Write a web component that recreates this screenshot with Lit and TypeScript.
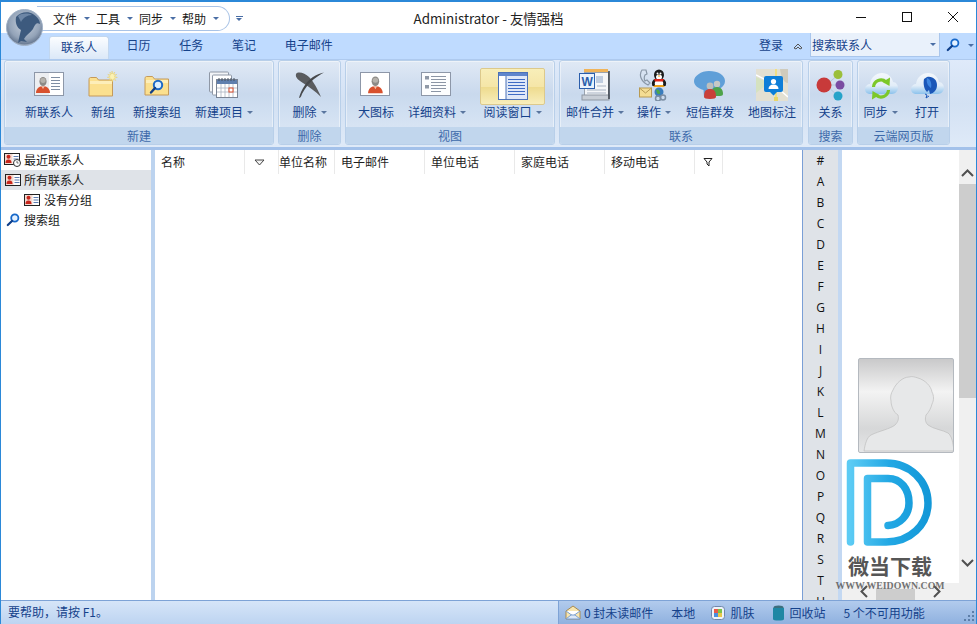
import { LitElement, html, css, svg } from "lit";
import { customElement } from "lit/decorators.js";

const person = (x: number, y: number, s = 1) => svg`<g transform="translate(${x} ${y}) scale(${s})">
  <ellipse cx="8" cy="5.500" rx="3.600" ry="4.600" fill="#8c8a86"/><ellipse cx="8" cy="4.500" rx="2.600" ry="2.400" fill="#b5b2ac"/>
  <path d="M1 17c0-4 3-6.500 5-6.500h4c2 0 5 2.500 5 6.500z" fill="#d8512e"/><path d="M6.500 10.500L8 13l1.500-2.500z" fill="#f2c2a8"/></g>`;

const cardLines = (x: number, y: number, n: number) => svg`${Array.from({ length: n }, (_, i) => svg`<rect x="${x}" y="${y + i * 3}" width="9" height="1" fill="#7f8ea3"/>`)}`;

const folder = svg`<path d="M1 5.500c0-1 .5-2 1.500-2h6l2 2.500h14v16H1z" fill="#fbe08f" stroke="#c59a5a"/><path d="M2 7h22v3H2z" fill="#fdeeb9"/>`;

const cloud = svg`<path d="M7 25c-4 0-6-2-6-5 0-3 3-5 5-5 1-7 6-11 12-11 6 0 10 4 11 9 3 0 5 3 5 6 0 3-3 6-6 6z" fill="url(#cloudG)"/>
  <defs><linearGradient id="cloudG" x1="0" y1="0" x2="0" y2="1"><stop offset="0" stop-color="#f4f8fc"/><stop offset=".6" stop-color="#e2edf8"/><stop offset="1" stop-color="#8cc2ec"/></linearGradient></defs>`;

const icons: Record<string, unknown> = {
  contact: html`<svg width="32" height="26" viewBox="0 0 32 26"><rect x="1.500" y=".5" width="29" height="23" fill="#fff" stroke="#8d97a8"/><rect x="2" y="1" width="14" height="22" fill="#eceef1"/>${person(2, 4)}${cardLines(18, 5, 5)}</svg>`,
  newfolder: html`<svg width="32" height="28" viewBox="0 0 32 28"><g transform="translate(1 3)">${folder}</g><path d="M25 0l.8 3 2-2-1 3 3-.6-2.500 2 3 1-3 .5 1.500 2.600-2.700-1.500-.6 3-1-3-2.500 1.500 1.300-2.600-3-.5 2.800-1-2.300-2 3 .6-1-3 2 2z" fill="#fbf2b4" stroke="#e8c84e" stroke-width=".4"/></svg>`,
  searchfolder: html`<svg width="28" height="26" viewBox="0 0 28 26"><g transform="translate(1 1)">${folder}</g><circle cx="15" cy="13" r="4.200" fill="#dcefff" stroke="#1d69c6" stroke-width="2"/><path d="M12 16l-4 4.500" stroke="#123f86" stroke-width="2.400" stroke-linecap="round"/></svg>`,
  newitem: html`<svg width="30" height="28" viewBox="0 0 30 28"><rect x=".5" y="1" width="19" height="20" rx="1" fill="#f2f4f7" stroke="#8f98a6"/><rect x="3.500" y="4" width="19" height="20" rx="1" fill="#fff" stroke="#8f98a6"/><rect x="7.500" y="8.500" width="21" height="18" fill="#fff" stroke="#7a8494"/><rect x="8" y="9" width="20" height="4" fill="#5f7fae"/><path d="M8 17h20M8 21h20M12 13v13M16 13v13M20 13v13M24 13v13" stroke="#a9b2c0" stroke-width=".8"/><rect x="20" y="17" width="4" height="4" fill="#fff" stroke="#d94a28"/><path d="M10 7v3M13 7v3M16 7v3M19 7v3M22 7v3M25 7v3" stroke="#45505f"/></svg>`,
  del: html`<svg width="30" height="28" viewBox="0 0 30 28"><path d="M1 3C3 0 10 2 14 6c5 5 9 13 12 20C20 20 14 16 8 12 4 9 0 7 1 3z" fill="#5a5c5f"/><path d="M29 1.500C21 3 14 8 10 14c-3 4-5 9-6 13 1 0 2-1 3-4 3-6 7-11 12-15 4-3 7-5 10-6.500z" fill="#47494c"/></svg>`,
  large: html`<svg width="32" height="26" viewBox="0 0 32 26"><rect x=".5" y=".5" width="29" height="23" fill="#fff" stroke="#8d97a8"/>${person(7, 3.500, 1.050)}</svg>`,
  detail: html`<svg width="32" height="26" viewBox="0 0 32 26"><rect x=".5" y=".5" width="29" height="23" fill="#fcfdfe" stroke="#8d97a8"/><rect x="4" y="4" width="4" height="3.500" fill="#8f98a6"/><rect x="4" y="13" width="4" height="3.500" fill="#8f98a6"/><path d="M10 4.500h15M10 7.500h15M10 10.500h15M10 13.500h15M10 16.500h15M10 19.500h10" stroke="#8b95a5"/></svg>`,
  reading: html`<svg width="30" height="28" viewBox="0 0 30 28"><rect x=".5" y=".5" width="29" height="27" fill="#fff" stroke="#4c72b8"/><rect x="1" y="1" width="28" height="3" fill="#5f86cc"/><rect x="8" y="4" width="21" height="23" fill="#dfe8f8"/><path d="M8 4v23" stroke="#4c72b8"/><path d="M10 7.500h17M10 10.500h17M10 13.500h17M10 16.500h17M10 19.500h17M10 22.500h17" stroke="#3f6cc4"/></svg>`,
  word: html`<svg width="32" height="34" viewBox="0 0 32 34"><path d="M5 1h24v3H5z" fill="#f0b45a"/><rect x="5.500" y="4.500" width="24" height="25" fill="#f4f6f9" stroke="#9aa3ae"/><rect x="3" y="27" width="27" height="5" fill="#c8ced6" stroke="#8f98a3"/><path d="M30 3v28" stroke="#3a4048" stroke-width="1.500"/><rect x=".5" y="5.500" width="15" height="15" fill="#eaf2fc" stroke="#2b5eab"/><text x="2.500" y="17.500" font-size="12" font-weight="700" fill="#2b5eab" font-family="Liberation Sans">W</text><rect x="17" y="8" width="7" height="7" fill="#bfcde0"/><path d="M8 22h19M8 25h19M18 18h9" stroke="#a8b3c2"/></svg>`,
  action: html`<svg width="30" height="32" viewBox="0 0 30 32"><path d="M3 1C0 5 1 12 9 16l2-2-3-3-2 1c-1-2-1-4 0-6l2-1-1-4z" fill="none" stroke="#8a98a8" stroke-width="1.200"/><ellipse cx="20" cy="6" rx="5" ry="5.500" fill="#1b1b1b"/><ellipse cx="20" cy="8" rx="3" ry="2.500" fill="#fff"/><circle cx="18.500" cy="4.500" r="1" fill="#fff"/><circle cx="21.500" cy="4.500" r="1" fill="#fff"/><path d="M18.500 6.500h3L20 8z" fill="#f0a41c"/><path d="M15.500 10c-3 2-3 5-2 7h13c1-2 1-5-2-7z" fill="#1b1b1b"/><path d="M16.500 12c-1 2-1 3 0 5h7c1-2 1-3 0-5z" fill="#fff"/><path d="M15 10h10l-1 2.500h-8z" fill="#e0261a"/><path d="M14 18h6v-2h-4zM20 18h6l-2-2h-4z" fill="#f0a41c"/><rect x=".5" y="19" width="12" height="9" fill="#f4dd93" stroke="#b89a52"/><path d="M.5 19l6 5 6-5" fill="none" stroke="#b89a52"/><circle cx="20" cy="23" r="4.500" fill="#3b7dbd"/><path d="M17 21c2-1 3 0 4 2s-2 3-3 1z" fill="#4da74a"/><circle cx="24" cy="28.500" r="2.500" fill="none" stroke="#7b8ea3" stroke-width="1.500"/><circle cx="19" cy="29.500" r="2.500" fill="none" stroke="#7b8ea3" stroke-width="1.500"/></svg>`,
  sms: html`<svg width="34" height="32" viewBox="0 0 34 32"><path d="M16 2c9 0 16 4 16 10 0 6-7 10-15 10h-3l-3 6 -.5-7C4 19 1 16 1 12 1 7 8 2 16 2z" fill="#5f9fd8"/><circle cx="24" cy="15" r="3.200" fill="#c7c9c6"/><path d="M18 27c0-6 2-9 6-9s6 3 6 7c0 1-1 2-3 2z" fill="#4ea34a"/><circle cx="17" cy="17" r="3.400" fill="#bdbfbd"/><path d="M11 28c0-6 2-8 6-8s6 2 6 8c0 1-2 2-6 2s-6-1-6-2z" fill="#c9403a"/></svg>`,
  map: html`<svg width="32" height="32" viewBox="0 0 32 32"><rect width="32" height="32" fill="#e3e0d2"/><path d="M0 8l13 6L0 24z" fill="#d5e2c0"/><path d="M19 0h2v32h-2z" fill="#f1df84"/><path d="M24 0h8v14c-4 0-7-6-8-14z" fill="#cfcbbc"/><path d="M0 6l16 8M16 14l16 14" stroke="#fff" stroke-width="1.500"/><rect x="18" y="28" width="4" height="4" fill="#e9d66b"/><path d="M8 9a2 2 0 0 1 2-2h15a2 2 0 0 1 2 2v12a2 2 0 0 1-2 2h-4l-3.500 3.500L14 23h-4a2 2 0 0 1-2-2z" fill="#0d7ed8"/><circle cx="17.500" cy="12.500" r="2.600" fill="#fff"/><path d="M12.500 20c0-3 2-4.500 5-4.500s5 1.500 5 4.500z" fill="#fff"/></svg>`,
  rel: html`<svg width="30" height="32" viewBox="0 0 30 32"><path d="M10 16L22 6M10 16h17M10 16l12 11" stroke="#b9c6d8"/><circle cx="22" cy="5.500" r="4.500" fill="#9bbf3a"/><circle cx="8" cy="16" r="7.500" fill="#c83a3a"/><circle cx="24" cy="16" r="4.500" fill="#7a4ca2"/><circle cx="22" cy="27" r="4.500" fill="#26a3c9"/></svg>`,
  sync: html`<svg width="34" height="32" viewBox="0 0 34 32">${cloud}<path d="M9.500 18a7.500 7.500 0 0 1 12.500-5" fill="none" stroke="#7cc82a" stroke-width="3.200"/><path d="M26 8.500l-.5 8.500-7-4z" fill="#7cc82a"/><path d="M24.500 21a7.500 7.500 0 0 1-12.500 5" fill="none" stroke="#7cc82a" stroke-width="3.200"/><path d="M8 30.500l.5-8.500 7 4z" fill="#7cc82a"/></svg>`,
  open: html`<svg width="34" height="32" viewBox="0 0 34 32">${cloud}<path d="M14 10l3-2c6-1 10 3 10 8 0 5-3 8-7 9l-1-4-2 2c-3-3-4-8-3-13z" fill="#1b57b8"/><path d="M17 9c3 1 5 4 4 10-3-2-5-5-4-10z" fill="#3f86e0"/><path d="M15 25l2 1-1 3 3-2" stroke="#1b57b8" fill="none"/></svg>`,
};

const mini = html`<svg width="16" height="12" viewBox="0 0 16 12"><rect x=".5" y=".5" width="15" height="11" fill="#fff" stroke="#222"/><rect x="1" y="1" width="7.500" height="10" fill="#f3d9d0"/><circle cx="4.500" cy="3.800" r="2" fill="#c8261c"/><path d="M1.500 10c0-3 1.500-3.500 3-3.500s3 .5 3 3.500z" fill="#c8261c"/><path d="M9.500 3.500h5M9.500 6h5M9.500 8.500h5" stroke="#5d7cb0"/></svg>`;
const miniClock = html`<svg width="17" height="14" viewBox="0 0 17 14"><rect x=".5" y=".5" width="15" height="11" fill="#fff" stroke="#222"/><rect x="1" y="1" width="7.500" height="10" fill="#f3d9d0"/><circle cx="4.500" cy="3.800" r="2" fill="#c8261c"/><path d="M1.500 10c0-3 1.500-3.500 3-3.500s3 .5 3 3.500z" fill="#c8261c"/><path d="M9.500 3.500h5M9.500 6h5" stroke="#5d7cb0"/><circle cx="13" cy="10" r="3.500" fill="#fff" stroke="#333"/><path d="M13 8v2h1.500" stroke="#333" fill="none" stroke-width=".7"/></svg>`;
const lens = html`<svg width="14" height="14" viewBox="0 0 14 14"><circle cx="8.800" cy="5" r="3.600" fill="#e4f1ff" stroke="#1768c9" stroke-width="1.800"/><path d="M6 8L1.800 12" stroke="#0f3f8a" stroke-width="2.200" stroke-linecap="round"/></svg>`;

const groups = [
  { w: 270, pl: 14, label: "新建", items: [
    { t: "新联系人", i: "contact", w: 60 }, { t: "新组", i: "newfolder", w: 48 }, { t: "新搜索组", i: "searchfolder", w: 60 }, { t: "新建项目", i: "newitem", w: 74, a: 1 } ] },
  { w: 63, pl: 0, label: "删除", items: [{ t: "删除", i: "del", w: 61, a: 1 }] },
  { w: 210, pl: 0, label: "视图", items: [
    { t: "大图标", i: "large", w: 60 }, { t: "详细资料", i: "detail", w: 62, a: 1 }, { t: "阅读窗口", i: "reading", w: 65, ml: 12, sel: 1, a: 1 } ] },
  { w: 244, pl: 5, label: "联系", items: [
    { t: "邮件合并", i: "word", w: 60, a: 1 }, { t: "操作", i: "action", w: 58, a: 1 }, { t: "短信群发", i: "sms", w: 54 }, { t: "地图标注", i: "map", w: 54, ml: 8 } ] },
  { w: 45, pl: 0, label: "搜索", items: [{ t: "关系", i: "rel", w: 43 }] },
  { w: 93, pl: 0, label: "云端网页版", items: [{ t: "同步", i: "sync", w: 45, a: 1 }, { t: "打开", i: "open", w: 46, ml: 1 }] },
];

const columns = [
  { t: "名称", w: 90, pl: 6 }, { t: "", w: 34, pl: 9, arrow: 1 }, { t: "单位名称", w: 56, pl: 0 }, { t: "电子邮件", w: 90, pl: 6 },
  { t: "单位电话", w: 90, pl: 6 }, { t: "家庭电话", w: 90, pl: 6 }, { t: "移动电话", w: 90, pl: 6 }, { t: "", w: 28, pl: 8, filter: 1 },
];

const letters = "#ABCDEFGHIJKLMNOPQRSTU".split("");

@customElement("app-root")
export class AppRoot extends LitElement {
  static styles = css`
    :host { display: block; width: 977px; height: 624px; position: relative; overflow: hidden; box-sizing: border-box;
      border: 1px solid #2b88d8; border-top-width: 2px; border-bottom: 0; background: #fff;
      font: 12px/16px "Noto Sans CJK SC", "Noto Sans", sans-serif; color: #1a1a1a; }
    .shell { display: flex; flex-direction: column; height: 622px; }

    .title { height: 31px; flex: none; display: grid; grid-template-columns: 1fr auto 1fr; align-items: start; background: #fff; }
    .qat { margin: 4px 0 0 36px; width: 193px; height: 25px; box-sizing: border-box; display: flex; align-items: center; border: 1px solid #a9c3e6; border-left: 0; border-radius: 0 13px 13px 0; flex: none; padding-left: 16px; }
    .qat-wrap { display: flex; align-items: flex-start; }
    .qat-item { width: 43px; display: flex; align-items: center; flex: none; }
    .qat-item span { width: 31px; }
    .drop { width: 0; height: 0; border-left: 3px solid transparent; border-right: 3px solid transparent; border-top: 3px solid #4a6ea5; display: inline-block; flex: none; }
    .custom { margin: 14px 0 0 5px; display: flex; flex-direction: column; align-items: center; gap: 1px; width: 8px; }
    .custom i { display: block; width: 7px; height: 1px; background: #4a6ea5; }
    .wintitle { font-size: 13.400px; line-height: 18px; margin-top: 7px; color: #222; white-space: nowrap; }
    .winbtns { display: flex; justify-content: flex-end; }
    .winbtn { width: 46px; height: 30px; display: flex; align-items: center; justify-content: center; }
    .orb { position: absolute; left: 5px; top: 7px; width: 37px; height: 37px; }

    .tabbar { height: 26px; flex: none; background: #bfdbff; display: flex; align-items: stretch; padding-left: 48px; color: #15428b; }
    .tab { padding: 0 14.400px; line-height: 24px; white-space: nowrap; }
    .tab.on { padding: 0 11px; margin: 3px 3px 0 0; line-height: 20px; height: 23px; border: 1px solid #c2d7ef; border-bottom: 0; box-sizing: border-box; border-radius: 3px 3px 0 0; background: linear-gradient(#fbfdff, #dbe8f8); }
    .tabright { margin-left: auto; display: flex; align-items: flex-start; }
    .login { margin: 0 10px 0 0; line-height: 24px; }
    .chev { margin: 9px 7px 0 0; }
    .searchbox { width: 130px; height: 24px; box-sizing: border-box; background: #e9f1fb; border: 1px solid #a9c6ec; border-top: 0; display: flex; align-items: center; justify-content: space-between; padding: 0 3px 0 1px; }
    .searchgo { width: 26px; display: flex; justify-content: center; padding-top: 5px; }
    .righttri { margin: 11px 2px 0 2px; }

    .ribbon { height: 88px; flex: none; box-sizing: border-box; padding: 0 0 3px 3px; display: flex; gap: 4px; background: linear-gradient(#dfeafa, #d3e1f3 50%, #dfeaf8); border-top: 1px solid #aecaef; }
    .group { flex: none; box-sizing: border-box; height: 85px; border: 1px solid #b8cfe9; border-radius: 3px; display: flex; flex-direction: column; background: linear-gradient(#e0e9f5, #c9d9ed 40%, #d0dff1 60%, #dfe9f6); box-shadow: inset 0 0 0 1px rgba(255,255,255,.45); overflow: hidden; }
    .group:nth-child(4) { margin-right: 1px; }
    .btns { flex: 1; display: flex; align-items: flex-start; }
    .glabel { height: 17px; flex: none; background: #c1d6ed; color: #3e6aaa; text-align: center; line-height: 17px; white-space: nowrap; }
    .btn { flex: none; display: flex; flex-direction: column; align-items: center; height: 66px; box-sizing: border-box; color: #15428b; white-space: nowrap; }
    .ico { height: 38px; margin-top: 5px; display: flex; align-items: center; justify-content: center; flex: none; }
    .btn.sel { margin-top: 7px; height: 37px; border: 1px solid #dcc98c; border-radius: 2px; background: linear-gradient(#f8eeb9, #f5e6a8 50%, #eedb8e 52%, #f8eebc); overflow: visible; }
    .btn.sel .ico { margin-top: -1px; height: 36px; }
    .lab { display: flex; align-items: center; gap: 4px; line-height: 16px; margin-top: 0; }
    .lab .drop { border-top-color: #5a769f; }

    .sep { height: 3px; flex: none; background: #a3c1ea; }
    .body { flex: 1; min-height: 0; display: flex; background: #fff; overflow: hidden; }
    .tree { width: 150px; flex: none; box-sizing: border-box; }
    .node { height: 20px; display: flex; align-items: center; gap: 3px; padding-left: 3px; white-space: nowrap; color: #1a1a1a; }
    .node.on { background: #dfe3e8; }
    .node.sub { padding-left: 22px; gap: 4px; }
    .node .slot { width: 17px; display: flex; justify-content: center; flex: none; }
    .divider { width: 4px; flex: none; background: #bcd3ef; }
    .main { flex: 1; min-width: 0; }
    .head { display: flex; height: 24px; }
    .col { flex: none; box-sizing: border-box; display: flex; align-items: center; border-right: 1px solid #e9e9e9; white-space: nowrap; height: 24px; color: #1f1f1f; }
    .alpha { width: 36px; flex: none; box-sizing: border-box; border-left: 1px solid #7a9fd6; background: #dfe3e8; display: flex; flex-direction: column; align-items: center; overflow: hidden; padding-top: 1px; }
    .alpha span { height: 21px; flex: none; font: 12px/20px "Open Sans", "Noto Sans", sans-serif; color: #111; }
    .strip { width: 4px; flex: none; background: #c3d8f2; }
    .panel { width: 134px; flex: none; display: grid; grid-template-columns: 117px 17px; grid-template-rows: 433px 17px; background: #f0f0f0; }
    .pview { background: #fff; display: flex; justify-content: flex-start; padding: 208px 0 0 16px; box-sizing: border-box; overflow: hidden; }
    .avatar { width: 96px; height: 95px; flex: none; box-sizing: border-box; border: 1px solid #b4b9bf; border-radius: 2px; background: linear-gradient(#c9c9ca, #f3f3f3 35%, #d6d7d8 75%, #e6e7e8); }
    .vbar { display: flex; flex-direction: column; align-items: center; background: #f0f0f0; }
    .vbar .up { height: 34px; display: flex; align-items: flex-end; padding-bottom: 7px; box-sizing: border-box; flex: none; }
    .thumb { width: 100%; height: 214px; background: #cdcdcd; flex: none; }
    .vbar .dn { margin-top: auto; height: 32px; flex: none; display: flex; align-items: flex-start; padding-top: 8px; box-sizing: border-box; }
    .hbar { grid-column: 1 / 3; display: flex; align-items: center; padding-left: 18px; }
    .hthumb { width: 39px; height: 11px; margin-top: 6px; background: #cdcdcd; margin-left: 8px; }
    .hbar .rt { margin-left: 18px; }

    .status { height: 24px; flex: none; display: flex; box-sizing: border-box; border-top: 1px solid #7ea3d6; background: linear-gradient(#b6d0f2, #95b6e2); color: #15428b; }
    .sleft { width: 558px; flex: none; box-sizing: border-box; padding-left: 7px; line-height: 22px; background: linear-gradient(#d6e5f8, #bdd4f1); border-right: 1px solid #7ea3d6; }
    .sright { flex: 1; display: flex; align-items: center; padding-left: 6px; white-space: nowrap; background: linear-gradient(#b2cbed, #8fb1df); }
    .si { display: flex; align-items: center; gap: 3px; flex: none; }
    .s-local { margin-left: 18px; }
    .s-skin { margin-left: 16px; gap: 5px; }
    .s-bin { margin-left: 18px; gap: 4px; }
    .s-off { margin-left: 18px; }
    .grip { margin-left: auto; margin-right: 1px; margin-top: 8px; }

    .mark { position: absolute; left: 833px; top: 457px; width: 112px; display: flex; flex-direction: column; align-items: center; pointer-events: none; }
    .mark-t { font: 700 21px/24px "Noto Sans CJK SC", sans-serif; color: #565656; margin-top: 4px; white-space: nowrap; }
    .mark-u { font: 700 9.800px/12px "Liberation Serif", serif; color: rgba(90,90,90,.85); white-space: nowrap; margin-top: 3px; }
  `;

  private btn(b: any) {
    const cls = b.sel ? "btn sel" : "btn";
    const st = `width:${b.w}px;margin-left:${b.ml || 0}px`;
    return html`<div class=${cls} style=${st}>
      <div class="ico">${icons[b.i]}</div>
      <div class="lab">${b.t}${b.a ? html`<i class="drop"></i>` : ""}</div>
    </div>`;
  }

  render() {
    return html`<div class="shell">
      <div class="title">
        <div class="qat-wrap">
          <div class="qat">
            ${["文件", "工具", "同步", "帮助"].map((t) => html`<div class="qat-item"><span>${t}</span><i class="drop"></i></div>`)}
          </div>
          <div class="custom"><i></i><b class="drop"></b></div>
        </div>
        <div class="wintitle">Administrator - 友情强档</div>
        <div class="winbtns">
          <div class="winbtn"><svg width="14" height="14" viewBox="0 0 14 14"><path d="M2 7.500h10" stroke="#111"/></svg></div>
          <div class="winbtn"><svg width="14" height="14" viewBox="0 0 14 14"><rect x="2.500" y="2.500" width="9" height="9" fill="none" stroke="#111"/></svg></div>
          <div class="winbtn"><svg width="14" height="14" viewBox="0 0 14 14"><path d="M2 2l10 10M12 2L2 12" stroke="#111"/></svg></div>
        </div>
      </div>

      <div class="tabbar">
        <div class="tab on">联系人</div>
        <div class="tab">日历</div><div class="tab">任务</div><div class="tab">笔记</div><div class="tab">电子邮件</div>
        <div class="tabright">
          <div class="login">登录</div>
          <svg class="chev" width="10" height="8" viewBox="0 0 10 8"><path d="M1 6l4-4 4 4-2 1-2-2-2 2z" fill="none" stroke="#555" stroke-width="1"/></svg>
          <div class="searchbox"><span>搜索联系人</span><i class="drop"></i></div>
          <div class="searchgo">${lens}</div>
          <i class="drop righttri"></i>
        </div>
      </div>

      <div class="ribbon">
        ${groups.map((g) => html`<div class="group" style="width:${g.w}px">
          <div class="btns" style="padding-left:${g.pl}px">${g.items.map((b) => this.btn(b))}</div>
          <div class="glabel">${g.label}</div>
        </div>`)}
      </div>
      <div class="sep"></div>

      <div class="body">
        <div class="tree">
          <div class="node"><span class="slot">${miniClock}</span>最近联系人</div>
          <div class="node on"><span class="slot">${mini}</span>所有联系人</div>
          <div class="node sub"><span class="slot">${mini}</span>没有分组</div>
          <div class="node"><span class="slot">${lens}</span>搜索组</div>
        </div>
        <div class="divider"></div>
        <div class="main">
          <div class="head">
            ${columns.map((c) => html`<div class="col" style="width:${c.w}px;padding-left:${c.pl}px">
              ${c.t}
              ${c.arrow ? html`<svg width="11" height="7" viewBox="0 0 11 7"><path d="M1 1h9L5.500 6z" fill="#f4f4f4" stroke="#444"/></svg>` : ""}
              ${c.filter ? html`<svg width="10" height="10" viewBox="0 0 10 10"><path d="M1 1.500h8L6 5v4L4 7V5z" fill="#fff" stroke="#222"/></svg>` : ""}
            </div>`)}
          </div>
        </div>
        <div class="alpha">${letters.map((l) => html`<span>${l}</span>`)}</div>
        <div class="strip"></div>
        <div class="panel">
          <div class="pview">
            <div class="avatar">
              <svg width="94" height="93" viewBox="0 0 94 93"><path d="M5 92c1-7 3-14 7-16 8-4 19-6 24-10 3-3 4-6 3-10-4-2-7-9-7-14-1-4 0-8 2-11 3-7 10-13 16-13 3-1 6 0 9 1 7 2 13 8 14 14 2 4 2 8 0 12-1 4-3 8-6 11-1 4-1 7 2 10 5 4 15 5 20 8 4 3 5 10 6 18z" fill="#e7e8e9" stroke="#bdbdbd" stroke-width=".7"/></svg>
            </div>
          </div>
          <div class="vbar">
            <div class="up"><svg width="13" height="8" viewBox="0 0 13 8"><path d="M1 7l5.500-5.500L12 7" fill="none" stroke="#505050" stroke-width="2"/></svg></div>
            <div class="thumb"></div>
            <div class="dn"><svg width="13" height="8" viewBox="0 0 13 8"><path d="M1 1l5.500 5.500L12 1" fill="none" stroke="#505050" stroke-width="2"/></svg></div>
          </div>
          <div class="hbar">
            <svg width="8" height="13" viewBox="0 0 8 13"><path d="M7 1L1.500 6.500 7 12" fill="none" stroke="#505050" stroke-width="2"/></svg>
            <div class="hthumb"></div>
            <svg class="rt" width="8" height="13" viewBox="0 0 8 13"><path d="M1 1l5.500 5.500L1 12" fill="none" stroke="#505050" stroke-width="2"/></svg>
          </div>
        </div>
      </div>

      <div class="status">
        <div class="sleft">要帮助，请按 F1。</div>
        <div class="sright">
          <div class="si"><svg width="16" height="15" viewBox="0 0 16 15"><path d="M1 6l7-5 7 5v8H1z" fill="#f7e6b0" stroke="#a88a50"/><path d="M1 6l7 5 7-5" fill="#fff" stroke="#7a9fd0"/><path d="M1 14l5-4h4l5 4z" fill="#dce8f7" stroke="#7a9fd0"/></svg>0 封未读邮件</div>
          <div class="si s-local">本地</div>
          <div class="si s-skin"><svg width="14" height="14" viewBox="0 0 14 14"><rect x=".5" y=".5" width="13" height="13" rx="3" fill="#eef3fa" stroke="#6f86ab"/><rect x="3" y="3" width="4" height="4" fill="#e85a4a"/><rect x="7" y="3" width="4" height="4" fill="#7cc24a"/><rect x="3" y="7" width="4" height="4" fill="#4a8ee0"/><rect x="7" y="7" width="4" height="4" fill="#e8c84a"/></svg>肌肤</div>
          <div class="si s-bin"><svg width="13" height="16" viewBox="0 0 13 16"><ellipse cx="6.500" cy="2.500" rx="5" ry="2" fill="#3d6f7e"/><path d="M1 3h11v11c0 1-2 1.500-5.500 1.500S1 15 1 14z" fill="#1f87a4"/></svg>回收站</div>
          <div class="si s-off">5 个不可用功能</div>
          <svg class="grip" width="11" height="11" viewBox="0 0 11 11" fill="#5d7ea8"><rect x="8" y="0" width="2" height="2"/><rect x="4" y="4" width="2" height="2"/><rect x="8" y="4" width="2" height="2"/><rect x="0" y="8" width="2" height="2"/><rect x="4" y="8" width="2" height="2"/><rect x="8" y="8" width="2" height="2"/></svg>
        </div>
      </div>
    </div>

    <svg class="orb" viewBox="0 0 37 37">
      <defs><radialGradient id="orbG" cx=".5" cy=".4" r=".65"><stop offset="0" stop-color="#c9d2de"/><stop offset=".65" stop-color="#93a3b8"/><stop offset=".85" stop-color="#6d7e96"/><stop offset="1" stop-color="#e8edf3"/></radialGradient></defs>
      <circle cx="18.500" cy="18.500" r="18" fill="url(#orbG)" stroke="#9fb0c6"/>
      <path d="M10 8c4-5 12-6 17-3 5 3 7 7 7 10-4-2-5 1-7 5-3 4-7 6-9 10l3 3-6-1-3 2c1-5 2-9 3-13C11 19 9 14 10 8z" fill="#3d5a7e"/>
      <path d="M12 7c4-3 10-3 14-1-5 0-9 3-11 7-1-2-2-4-3-6z" fill="#6d86a6"/>
    </svg>

    <div class="mark">
      <svg width="88" height="90" viewBox="0 0 88 90">
        <defs><linearGradient id="dG" x1="0" y1="0" x2="1" y2="0"><stop offset="0" stop-color="#5ccbf4"/><stop offset=".5" stop-color="#22a8e4"/><stop offset="1" stop-color="#1398d8"/></linearGradient></defs>
        <path d="M4.500 83V4H40c24 0 42 18 42 40s-18 39-42 39H21.500V19.500H42c13 0 21 10.500 21 24.500 0 12-9 22-21 22.500" fill="none" stroke="url(#dG)" stroke-width="7.500" stroke-linecap="round" stroke-linejoin="round"/>
      </svg>
      <div class="mark-t">微当下载</div>
      <div class="mark-u">WWW.WEIDOWN.COM</div>
    </div>`;
  }
}
